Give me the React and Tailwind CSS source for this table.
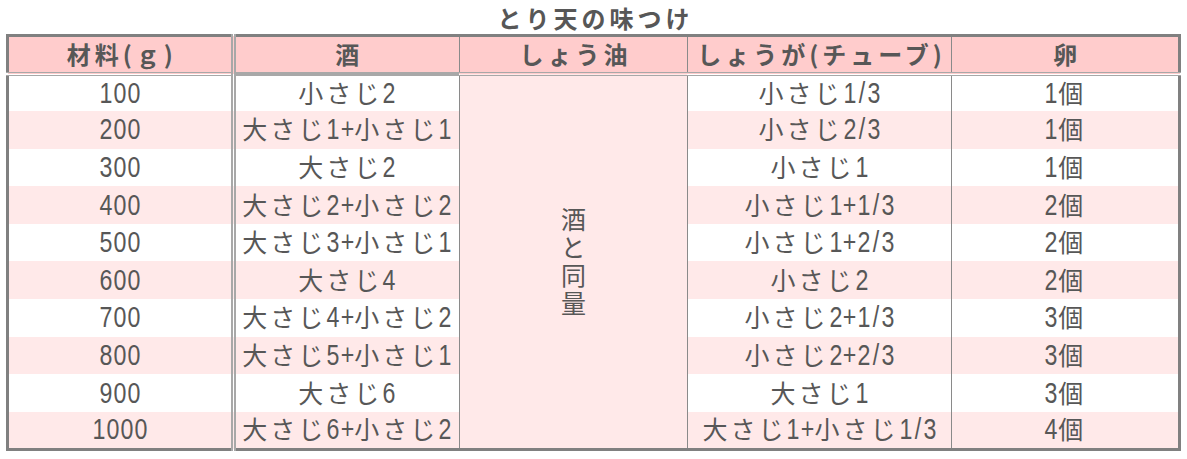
import React from "react";

const rows = [
  ["100", "小さじ2", "小さじ1/3", "1個"],
  ["200", "大さじ1+小さじ1", "小さじ2/3", "1個"],
  ["300", "大さじ2", "小さじ1", "1個"],
  ["400", "大さじ2+小さじ2", "小さじ1+1/3", "2個"],
  ["500", "大さじ3+小さじ1", "小さじ1+2/3", "2個"],
  ["600", "大さじ4", "小さじ2", "2個"],
  ["700", "大さじ4+小さじ2", "小さじ2+1/3", "3個"],
  ["800", "大さじ5+小さじ1", "小さじ2+2/3", "3個"],
  ["900", "大さじ6", "大さじ1", "3個"],
  ["1000", "大さじ6+小さじ2", "大さじ1+小さじ1/3", "4個"],
];

function Ch({ c }) {
  const w = c === "/" ? "w-[10px]" : "w-[14px]";
  return (
    <span className={`inline-flex justify-center ${w} overflow-visible`}>
      <span className="inline-block scale-x-[0.8] font-['Liberation_Sans',sans-serif] text-[29px] tracking-normal">
        {c}
      </span>
    </span>
  );
}

function T({ s }) {
  const parts = s.split(/([0-9+/]+)/).filter((p) => p !== "");
  return (
    <>
      {parts.map((p, i) =>
        /^[0-9+/]+$/.test(p) ? (
          <span key={i}>
            {p.split("").map((c, j) => (
              <Ch key={j} c={c} />
            ))}
          </span>
        ) : (
          <span key={i} className="tracking-[3px]">
            {p}
          </span>
        )
      )}
    </>
  );
}

export default function App() {
  const cjk = "font-['Noto_Sans_CJK_JP',sans-serif]";
  const th =
    "bg-[#ffcccc] border-b-[4px] border-double border-b-[#a8a8a8] font-bold text-[24px] tracking-[4px] text-[#575757] text-center p-0 pl-[4px] leading-none";
  return (
    <div className={`w-[1187px] h-[459px] bg-white ${cjk} text-[#575757]`}>
      <div className="h-[34px] flex items-center justify-center text-[24px] font-bold leading-none pt-[2px] tracking-[4px] pl-[4px]">
        とり天の味つけ
      </div>
      <table className="ml-[6px] w-[1175px] table-fixed border-collapse border-[3px] border-[#808080]">
        <colgroup>
          <col className="w-[225px]" />
          <col className="w-[226px]" />
          <col className="w-[227px]" />
          <col className="w-[264px]" />
          <col className="w-[227px]" />
        </colgroup>
        <thead>
          <tr className="h-[38px]">
            <th className={`${th} border-r-[5px] border-r-[#a8a8a8]`}>材料(ｇ)</th>
            <th className={`${th} border-r border-r-[#8a8a8a] border-solid`}>酒</th>
            <th className={`${th} border-r border-r-[#8a8a8a]`}>しょう油</th>
            <th className={`${th} border-r border-r-[#8a8a8a]`}>しょうが(チューブ)</th>
            <th className={th}>卵</th>
          </tr>
        </thead>
        <tbody>
          {rows.map((r, i) => {
            const bg = i % 2 === 1 ? "bg-[#ffe9e9]" : "bg-white";
            const td = `${bg} text-center text-[25px] leading-none p-0 whitespace-nowrap`;
            return (
              <tr key={i} className="h-[37.6px]">
                <td className={`${td} border-r-[5px] border-double border-r-[#a8a8a8]`}>
                  <T s={r[0]} />
                </td>
                <td className={`${td} border-r border-r-[#8a8a8a]`}>
                  <T s={r[1]} />
                </td>
                {i === 0 && (
                  <td rowSpan={10} className="bg-[#ffe9e9] border-r border-r-[#8a8a8a] p-0 align-middle">
                    <div className="flex justify-center">
                      <div className="[writing-mode:vertical-rl] text-[25px] leading-[30px] tracking-[3px] pt-[3px]">
                        酒と同量
                      </div>
                    </div>
                  </td>
                )}
                <td className={`${td} border-r border-r-[#8a8a8a]`}>
                  <T s={r[2]} />
                </td>
                <td className={td}>
                  <T s={r[3]} />
                </td>
              </tr>
            );
          })}
        </tbody>
      </table>
    </div>
  );
}
